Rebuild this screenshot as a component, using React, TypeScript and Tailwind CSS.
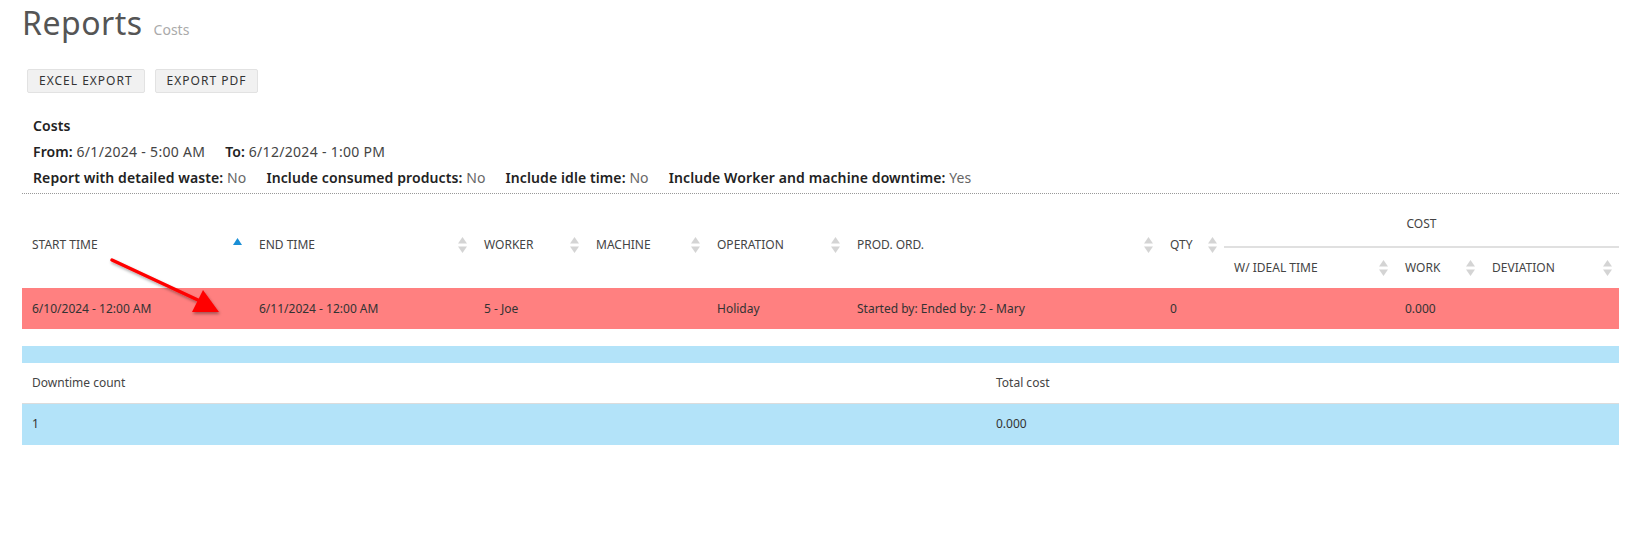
import React from 'react'

type Col = { label: string; width: number; sort?: 'asc' | 'none' }

const cols: Col[] = [
    { label: 'Start time', width: 227, sort: 'asc' },
    { label: 'End time', width: 225, sort: 'none' },
    { label: 'Worker', width: 112, sort: 'none' },
    { label: 'Machine', width: 121, sort: 'none' },
    { label: 'Operation', width: 140, sort: 'none' },
    { label: 'Prod. ord.', width: 313, sort: 'none' },
    { label: 'Qty', width: 64, sort: 'none' },
]

const costCols: Col[] = [
    { label: 'W/ ideal time', width: 171, sort: 'none' },
    { label: 'Work', width: 87, sort: 'none' },
    { label: 'Deviation', width: 137, sort: 'none' },
]

function SortIcon({ sort }: { sort?: 'asc' | 'none' }) {
    if (sort === 'asc') {
        return (
            <svg className="absolute right-[7px] top-1/2 -translate-y-[7px]" width="9" height="7" viewBox="0 0 9 7">
                <path d="M4.5 0 L9 7 L0 7 Z" fill="#1a8fd6" />
            </svg>
        )
    }
    return (
        <svg className="absolute right-[7px] top-1/2 -translate-y-1/2" width="9" height="16" viewBox="0 0 9 16">
            <path d="M4.5 0 L9 6.5 L0 6.5 Z" fill="#d4d4d4" />
            <path d="M0 9.5 L9 9.5 L4.5 16 Z" fill="#d4d4d4" />
        </svg>
    )
}

function HeadCell({ col, rowSpan }: { col: Col; rowSpan?: number }) {
    return (
        <th
            rowSpan={rowSpan}
            className="relative pl-[10px] pr-5 text-left align-middle text-[12px] font-normal uppercase text-[#444]"
        >
            {col.label}
            <SortIcon sort={col.sort} />
        </th>
    )
}

export default function App() {
    return (
        <div className="relative min-h-[546px] bg-white pl-[22px] pr-[18px] font-['Noto_Sans',sans-serif] text-[#333]">
            <div className="flex items-baseline pt-[2px]">
                <h1 className="text-[32px] font-normal leading-[42px] tracking-[0.5px] text-[#555]">Reports</h1>
                <span className="ml-[11px] text-[14px] text-[#aaa]">Costs</span>
            </div>

            <div className="mt-[25px] flex gap-[10px] pl-[5px]">
                <button className="rounded-[2px] border border-[#e2e2e2] bg-[#f1f1f1] px-[11px] py-[3px] text-[12px] uppercase leading-4 tracking-[1px] text-[#333]">
                    Excel export
                </button>
                <button className="rounded-[2px] border border-[#e2e2e2] bg-[#f1f1f1] px-[11px] py-[3px] text-[12px] uppercase leading-4 tracking-[1px] text-[#333]">
                    Export PDF
                </button>
            </div>

            <div className="mt-[20px] border-b border-dotted border-[#999] pb-[2px] pl-[11px] text-[14px] leading-[26px] tracking-[0.1px] text-[#222]">
                <div className="font-semibold">Costs</div>
                <div>
                    <span className="mr-5">
                        <b className="font-semibold">From:</b> <span className="tracking-[0.3px] text-[#444]">6/1/2024 - 5:00 AM</span>
                    </span>
                    <span>
                        <b className="font-semibold">To:</b> <span className="tracking-[0.3px] text-[#444]">6/12/2024 - 1:00 PM</span>
                    </span>
                </div>
                <div>
                    <span className="mr-5">
                        <b className="font-semibold">Report with detailed waste:</b> <span className="text-[#666]">No</span>
                    </span>
                    <span className="mr-5">
                        <b className="font-semibold">Include consumed products:</b> <span className="text-[#666]">No</span>
                    </span>
                    <span className="mr-5">
                        <b className="font-semibold">Include idle time:</b> <span className="text-[#666]">No</span>
                    </span>
                    <span>
                        <b className="font-semibold">Include Worker and machine downtime:</b> <span className="text-[#666]">Yes</span>
                    </span>
                </div>
            </div>

            <table className="mt-[7px] w-full table-fixed border-collapse text-[12px]">
                <colgroup>
                    {[...cols, ...costCols].map((c) => (
                        <col key={c.label} style={{ width: c.width }} />
                    ))}
                </colgroup>
                <thead>
                    <tr className="h-[46px]">
                        {cols.map((c) => (
                            <HeadCell key={c.label} col={c} rowSpan={2} />
                        ))}
                        <th
                            colSpan={3}
                            className="border-b-2 border-[#e0e0e0] text-center align-middle text-[12px] font-normal uppercase text-[#444]"
                        >
                            Cost
                        </th>
                    </tr>
                    <tr className="h-[41px]">
                        {costCols.map((c) => (
                            <HeadCell key={c.label} col={c} />
                        ))}
                    </tr>
                </thead>
                <tbody>
                    <tr className="h-[41px] bg-[#ff8080] text-[#333]">
                        <td className="pl-[10px]">6/10/2024 - 12:00 AM</td>
                        <td className="pl-[10px]">6/11/2024 - 12:00 AM</td>
                        <td className="pl-[10px]">5 - Joe</td>
                        <td className="pl-[10px]"></td>
                        <td className="pl-[10px]">Holiday</td>
                        <td className="pl-[10px]">Started by: Ended by: 2 - Mary</td>
                        <td className="pl-[10px]">0</td>
                        <td className="pl-[10px]"></td>
                        <td className="pl-[10px]">0.000</td>
                        <td className="pl-[10px]"></td>
                    </tr>
                </tbody>
            </table>

            <table className="mt-[17px] w-full table-fixed border-collapse text-[12px] text-[#444]">
                <colgroup>
                    <col style={{ width: 964 }} />
                    <col style={{ width: 633 }} />
                </colgroup>
                <thead>
                    <tr className="h-[17px] bg-[#b3e3f9]">
                        <th></th>
                        <th></th>
                    </tr>
                </thead>
                <tbody>
                    <tr className="h-[40px] border-b border-[#dcdcdc]">
                        <td className="pl-[10px]">Downtime count</td>
                        <td className="pl-[10px]">Total cost</td>
                    </tr>
                    <tr className="h-[42px] bg-[#b3e3f9] text-[#333]">
                        <td className="pl-[10px]">1</td>
                        <td className="pl-[10px]">0.000</td>
                    </tr>
                </tbody>
            </table>

            {/* annotation arrow drawn over the table */}
            <svg className="pointer-events-none absolute left-[100px] top-[250px]" width="140" height="80" viewBox="0 0 140 80">
                <defs>
                    <filter id="sh" x="-20%" y="-20%" width="140%" height="140%">
                        <feDropShadow dx="1" dy="2" stdDeviation="1.5" floodColor="#000" floodOpacity="0.35" />
                    </filter>
                </defs>
                <g filter="url(#sh)">
                    <line x1="12" y1="10" x2="100" y2="51" stroke="#ff0000" strokeWidth="3.5" strokeLinecap="round" />
                    <path d="M119 62 L92 62 L103 40 Z" fill="#ff0000" />
                </g>
            </svg>
        </div>
    )
}
